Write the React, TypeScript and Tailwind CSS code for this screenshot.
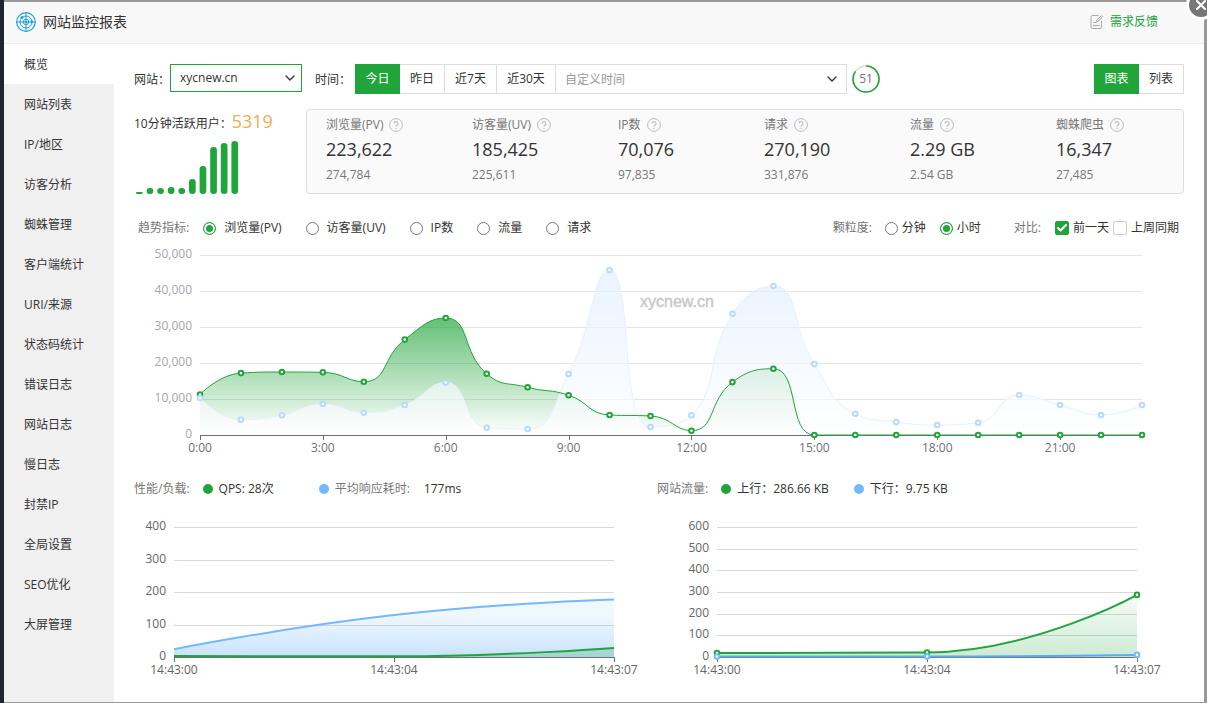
import type { ReactNode } from 'react';
import { Check, ChevronDown, X } from 'lucide-react';

const navItems = [
  '概览',
  '网站列表',
  'IP/地区',
  '访客分析',
  '蜘蛛管理',
  '客户端统计',
  'URI/来源',
  '状态码统计',
  '错误日志',
  '网站日志',
  '慢日志',
  '封禁IP',
  '全局设置',
  'SEO优化',
  '大屏管理',
];

const stats = [
  { label: '浏览量(PV)', value: '223,622', previous: '274,784' },
  { label: '访客量(UV)', value: '185,425', previous: '225,611' },
  { label: 'IP数', value: '70,076', previous: '97,835' },
  { label: '请求', value: '270,190', previous: '331,876' },
  { label: '流量', value: '2.29 GB', previous: '2.54 GB' },
  { label: '蜘蛛爬虫', value: '16,347', previous: '27,485' },
];

const metrics = ['浏览量(PV)', '访客量(UV)', 'IP数', '流量', '请求'];

const activeUsers = [2, 6, 6, 7, 6, 15, 28, 47, 51, 53];

const today = [
  11250, 17200, 17500, 17400, 14800, 26500, 32500, 17000, 13250, 11030, 5560, 5280,
  1200, 14700, 18400, 0, 0, 0, 0, 0, 0, 0, 0, 0,
];
const yesterday = [
  10280, 4250, 5470, 8610, 6190, 8330, 14600, 2030, 1670, 16950, 45850, 2200,
  5470, 33700, 41400, 19700, 5900, 3600, 2780, 3400, 11100, 8330, 5560, 8330,
];

type Point = { x: number; y: number };
type Plot = { left: number; right: number; top: number; bottom: number; max: number };

const clamp = (v: number, a: number, b: number) =>
  Math.max(Math.min(a, b), Math.min(v, Math.max(a, b)));

function toPoints(values: number[], plot: Plot): Point[] {
  const step = (plot.right - plot.left) / (values.length - 1);
  return values.map((v, i) => ({
    x: plot.left + i * step,
    y: plot.bottom - (v / plot.max) * (plot.bottom - plot.top),
  }));
}

// Bezier through every point, control points kept between the neighbours
function smoothPath(pts: Point[], smooth = 0.5) {
  let d = `M${pts[0].x},${pts[0].y}`;
  let c0 = pts[0];
  for (let i = 1; i < pts.length; i++) {
    const prev = pts[i - 1];
    const p = pts[i];
    const next = pts[i + 1];
    let c1 = p;
    let nextC0 = p;
    if (next) {
      const lenPrev = Math.hypot(p.x - prev.x, p.y - prev.y);
      const lenNext = Math.hypot(next.x - p.x, next.y - p.y);
      const ratio = lenNext / (lenNext + lenPrev);
      const nx = clamp(p.x + (next.x - prev.x) * smooth * ratio, p.x, next.x);
      const ny = clamp(p.y + (next.y - prev.y) * smooth * ratio, p.y, next.y);
      c1 = {
        x: clamp(p.x - ((nx - p.x) * lenPrev) / lenNext, prev.x, p.x),
        y: clamp(p.y - ((ny - p.y) * lenPrev) / lenNext, prev.y, p.y),
      };
      nextC0 = {
        x: p.x + ((p.x - c1.x) * lenNext) / lenPrev,
        y: p.y + ((p.y - c1.y) * lenNext) / lenPrev,
      };
    }
    d += ` C${c0.x},${c0.y} ${c1.x},${c1.y} ${p.x},${p.y}`;
    c0 = nextC0;
  }
  return d;
}

function areaPath(pts: Point[], plot: Plot) {
  return `${smoothPath(pts)} L${plot.right},${plot.bottom} L${plot.left},${plot.bottom} Z`;
}

function Dots({ points, color }: { points: Point[]; color: string }) {
  return (
    <g fill="#fff" stroke={color} strokeWidth="2">
      {points.map((p) => (
        <circle key={p.x} cx={p.x} cy={p.y} r="2.3" />
      ))}
    </g>
  );
}

function Axes({
  plot,
  yLabels,
  xLabels,
  yColor,
  xColor,
  gridColor,
}: {
  plot: Plot;
  yLabels: string[];
  xLabels: { x: number; text: string }[];
  yColor: string;
  xColor: string;
  gridColor: string;
}) {
  const step = (plot.bottom - plot.top) / (yLabels.length - 1);
  return (
    <g fontSize="12">
      {yLabels.map((text, i) => {
        const y = Math.round(plot.bottom - i * step);
        return (
          <g key={text}>
            {i > 0 && (
              <line x1={plot.left} x2={plot.right} y1={y + 0.5} y2={y + 0.5} stroke={gridColor} />
            )}
            <text x={plot.left - 8} y={y + 3} textAnchor="end" fill={yColor}>
              {text}
            </text>
          </g>
        );
      })}
      <line
        x1={plot.left}
        x2={plot.right}
        y1={plot.bottom + 0.5}
        y2={plot.bottom + 0.5}
        stroke="#6e7079"
      />
      {xLabels.map(({ x, text }) => (
        <g key={text}>
          <line
            x1={Math.round(x) + 0.5}
            x2={Math.round(x) + 0.5}
            y1={plot.bottom}
            y2={plot.bottom + 5}
            stroke="#6e7079"
          />
          <text x={x} y={plot.bottom + 17} textAnchor="middle" fill={xColor}>
            {text}
          </text>
        </g>
      ))}
    </g>
  );
}

function TrendChart() {
  const plot = { left: 66, right: 1008, top: 15, bottom: 195, max: 50000 };
  const current = toPoints(today, plot);
  const previous = toPoints(yesterday, plot);
  const xLabels = [0, 3, 6, 9, 12, 15, 18, 21].map((h) => ({ x: current[h].x, text: `${h}:00` }));

  return (
    <svg viewBox="0 0 1050 222" className="block w-full" role="img" aria-label="趋势图">
      <defs>
        <linearGradient id="today" x1="0" y1="0" x2="0" y2="1">
          <stop offset="0" stopColor="#20a53a" stopOpacity="0.7" />
          <stop offset="1" stopColor="#20a53a" stopOpacity="0" />
        </linearGradient>
        <linearGradient id="yesterday" x1="0" y1="0" x2="0" y2="1">
          <stop offset="0" stopColor="#e0eefe" stopOpacity="0.7" />
          <stop offset="1" stopColor="#ffffff" stopOpacity="0.7" />
        </linearGradient>
      </defs>
      <Axes
        plot={plot}
        yLabels={['0', '10,000', '20,000', '30,000', '40,000', '50,000']}
        xLabels={xLabels}
        yColor="#a6a6ad"
        xColor="#6e7079"
        gridColor="#e4e4e4"
      />
      <path d={areaPath(current, plot)} fill="url(#today)" />
      <path d={areaPath(previous, plot)} fill="url(#yesterday)" />
      <path d={smoothPath(previous)} fill="none" stroke="#e6f2ff" />
      <path d={smoothPath(current)} fill="none" stroke="#20a53a" />
      <Dots points={current} color="#20a53a" />
      <Dots points={previous} color="#b8dafd" />
      <text
        x="506"
        y="67"
        fontSize="16"
        fill="#c8c8c8"
        stroke="#c8c8c8"
        strokeWidth="0.4"
        className="font-['Liberation_Sans',sans-serif]"
      >
        xycnew.cn
      </text>
    </svg>
  );
}

const times = ['14:43:00', '14:43:04', '14:43:07'];

function LoadChart() {
  const plot = { left: 40, right: 480, top: 12, bottom: 142, max: 400 };
  const qps = toPoints([3, 2, 28], plot);
  const response = toPoints([24, 129, 177], plot);

  return (
    <svg viewBox="0 0 523 165" className="block w-full" role="img" aria-label="性能/负载">
      <defs>
        <linearGradient id="response" x1="0" y1="0" x2="0" y2="1">
          <stop offset="0" stopColor="#73b9ff" stopOpacity="0.1" />
          <stop offset="0.3" stopColor="#73b9ff" stopOpacity="0.12" />
          <stop offset="1" stopColor="#62aaf5" stopOpacity="0.35" />
        </linearGradient>
      </defs>
      <Axes
        plot={plot}
        yLabels={['0', '100', '200', '300', '400']}
        xLabels={times.map((text, i) => ({ x: qps[i].x, text }))}
        yColor="#666"
        xColor="#666"
        gridColor="#d9d9d9"
      />
      <path d={areaPath(response, plot)} fill="url(#response)" />
      <path d={areaPath(qps, plot)} fill="#20a53a" fillOpacity="0.2" />
      <path d={smoothPath(response)} fill="none" stroke="#73b9ff" strokeWidth="2" />
      <path d={smoothPath(qps)} fill="none" stroke="#20a53a" strokeWidth="2" />
    </svg>
  );
}

function TrafficChart() {
  const plot = { left: 60, right: 480, top: 12, bottom: 142, max: 600 };
  const up = toPoints([18, 21, 286.66], plot);
  const down = toPoints([2, 2, 9.75], plot);

  return (
    <svg viewBox="0 0 527 165" className="block w-full" role="img" aria-label="网站流量">
      <defs>
        <linearGradient id="up" x1="0" y1="0" x2="0" y2="1">
          <stop offset="0" stopColor="#20a53a" stopOpacity="0.04" />
          <stop offset="1" stopColor="#20a53a" stopOpacity="0.22" />
        </linearGradient>
      </defs>
      <Axes
        plot={plot}
        yLabels={['0', '100', '200', '300', '400', '500', '600']}
        xLabels={times.map((text, i) => ({ x: up[i].x, text }))}
        yColor="#666"
        xColor="#666"
        gridColor="#d9d9d9"
      />
      <path d={areaPath(up, plot)} fill="url(#up)" />
      <path d={smoothPath(up)} fill="none" stroke="#20a53a" strokeWidth="2" />
      <path d={smoothPath(down)} fill="none" stroke="#5ba9f5" strokeWidth="2" />
      <Dots points={up} color="#20a53a" />
      <Dots points={down} color="#73b9ff" />
    </svg>
  );
}

function RadarIcon() {
  return (
    <svg viewBox="0 0 20 20" className="size-5" fill="none" stroke="#20a0dc" aria-hidden="true">
      <circle cx="10" cy="10" r="9.3" strokeWidth="1.2" />
      <circle cx="10" cy="10" r="6" />
      <circle cx="10" cy="10" r="2.7" />
      <path d="M10 0.5v19M0.5 10h19" strokeWidth="1" />
      <circle cx="6" cy="5.5" r="1.5" fill="#20a0dc" stroke="none" />
      <circle cx="15.8" cy="9.8" r="1.4" fill="#20a0dc" stroke="none" />
      <circle cx="10" cy="10" r="1.1" fill="#20a0dc" stroke="none" />
    </svg>
  );
}

function FeedbackIcon() {
  return (
    <svg viewBox="0 0 14 16" className="h-4 w-[14px]" fill="none" stroke="#aaa" aria-hidden="true">
      <path d="M8.5 1.5H2.5a1.5 1.5 0 0 0-1.5 1.5v10a1.5 1.5 0 0 0 1.5 1.5h7.5a1.5 1.5 0 0 0 1.5-1.5V7" />
      <path d="M3 8.5h3.5M3 11.5h7" />
      <path d="m11.4 1.6 1.2 1.2L8 7.3l-1.6.4.4-1.6z" />
    </svg>
  );
}

function HelpIcon() {
  return (
    <svg viewBox="0 0 14 14" className="size-[14px]" fill="none" stroke="#bbb" aria-hidden="true">
      <circle cx="7" cy="7" r="6.4" />
      <path d="M5 5.6a2 2 0 1 1 3 1.7c-.7.4-1 .7-1 1.4" strokeWidth="1.1" />
      <circle cx="7" cy="10.4" r="0.7" fill="#bbb" stroke="none" />
    </svg>
  );
}

function Radio({
  name,
  label,
  checked,
  wide,
}: {
  name: string;
  label: string;
  checked?: boolean;
  wide?: boolean;
}) {
  return (
    <label className={wide ? 'flex items-center gap-2' : 'flex items-center gap-1'}>
      <input
        type="radio"
        name={name}
        defaultChecked={checked}
        className="size-[13px] appearance-none rounded-full border border-[#767676] bg-white checked:border-[#20a53a] checked:bg-[#20a53a] checked:inset-ring-2 checked:inset-ring-white"
      />
      {label}
    </label>
  );
}

function Checkbox({ label, checked }: { label: string; checked?: boolean }) {
  return (
    <label className="flex items-center gap-1">
      <span className="grid size-[14px] place-items-center">
        <input
          type="checkbox"
          defaultChecked={checked}
          className="peer size-[14px] appearance-none rounded-[2px] border border-[#ccc] bg-white [grid-area:1/1] checked:border-[#20a53a] checked:bg-[#20a53a]"
        />
        <Check
          className="pointer-events-none invisible size-3 text-white [grid-area:1/1] peer-checked:visible"
          strokeWidth={4}
        />
      </span>
      {label}
    </label>
  );
}

function Legend({ dot, children }: { dot: string; children: ReactNode }) {
  return (
    <span className="flex items-center gap-[6px]">
      <span className={`size-[10px] rounded-full ${dot}`} />
      {children}
    </span>
  );
}

export default function App() {
  return (
    <div className="flex min-h-screen overflow-hidden bg-[#999] font-['Open_Sans','Noto_Sans_CJK_SC',sans-serif] text-xs text-[#333]">
      <div className="w-1 shrink-0 bg-[#22262a]" />

      <div className="relative mt-[2px] mr-[3px] mb-px flex flex-1 flex-col bg-white">
        <button
          aria-label="关闭"
          className="absolute -top-3 -right-3 flex size-[30px] items-center justify-center rounded-full border-[3px] border-white bg-[#777] text-white"
        >
          <X className="size-4" strokeWidth={3} />
        </button>

        <header className="flex h-[42px] items-center justify-between border-b border-[#eee] bg-[#f8f8f8] pr-[46px] pb-[2px] pl-3">
          <h1 className="flex items-center gap-[7px] text-sm">
            <RadarIcon />
            网站监控报表
          </h1>
          <a href="#feedback" className="flex items-center gap-[6px] text-[#20a53a]">
            <FeedbackIcon />
            需求反馈
          </a>
        </header>

        <div className="flex flex-1">
          <nav className="w-[110px] shrink-0 bg-[#f0f0f0]">
            {navItems.map((item, index) => (
              <a
                key={item}
                href="#"
                className={`flex h-10 items-center pt-[2px] pl-5 ${index === 0 ? 'bg-white' : ''}`}
              >
                {item}
              </a>
            ))}
          </nav>

          <main className="min-w-0 flex-1 px-5 pt-5">
            {/* Filters */}
            <div className="flex h-[30px] justify-between">
              <div className="flex items-center">
                <label htmlFor="site" className="w-9 pt-[2px]">
                  网站：
                </label>
                <div className="relative mb-[2px] h-7 w-[132px]">
                  <select
                    id="site"
                    className="size-full appearance-none border border-[#20a53a] bg-white pl-[9px] text-xs"
                  >
                    <option>xycnew.cn</option>
                  </select>
                  <ChevronDown className="pointer-events-none absolute top-[6px] right-1 size-4" />
                </div>
                <span className="ml-[13px] w-10 pt-[2px]">时间：</span>
                <div className="flex h-[30px]">
                  <button className="w-[45px] bg-[#20a53a] text-white">今日</button>
                  <button className="w-[45px] border-y border-r border-[#ddd]">昨日</button>
                  <button className="w-[52px] border-y border-r border-[#ddd]">近7天</button>
                  <button className="w-[59px] border-y border-r border-[#ddd]">近30天</button>
                  <div className="relative w-[291px]">
                    <select
                      aria-label="自定义时间"
                      className="size-full appearance-none border-y border-r border-[#ddd] bg-white pt-[2px] pl-[9px] text-xs text-[#999]"
                    >
                      <option>自定义时间</option>
                    </select>
                    <ChevronDown className="pointer-events-none absolute top-[7px] right-[7px] size-4" />
                  </div>
                </div>
                <div className="ml-[5px] grid size-7 place-items-center text-[#777]">
                  <svg viewBox="0 0 28 28" className="size-7 [grid-area:1/1]" fill="none" strokeWidth="1.6">
                    <circle cx="14" cy="14" r="13" stroke="#ddd" />
                    <circle
                      cx="14"
                      cy="14"
                      r="13"
                      stroke="#20a53a"
                      pathLength="60"
                      strokeDasharray="51 9"
                      transform="rotate(-90 14 14)"
                    />
                  </svg>
                  <span className="[grid-area:1/1]">51</span>
                </div>
              </div>
              <div className="flex">
                <button className="w-[45px] bg-[#20a53a] text-white">图表</button>
                <button className="w-[45px] border-y border-r border-[#ddd]">列表</button>
              </div>
            </div>

            {/* Overview */}
            <div className="mt-[15px] flex">
              <div className="w-[172px] shrink-0">
                <div className="flex h-6 items-center">
                  <span className="mt-[6px]">10分钟活跃用户：</span>
                  <span className="text-lg text-[#f0ad4e]">5319</span>
                </div>
                <svg viewBox="0 0 106 53" className="mt-2 ml-[2px] h-[53px] w-[106px]" fill="#20a53a">
                  {activeUsers.map((h, i) => (
                    <rect
                      key={i}
                      x={i * 10.6}
                      y={53 - h}
                      width="6.7"
                      height={h}
                      rx={Math.min(3.3, h / 2)}
                    />
                  ))}
                </svg>
              </div>
              <div className="grid h-[85px] flex-1 grid-cols-6 rounded-[4px] border border-[#ddd] bg-[#fafafa]">
                {stats.map((stat) => (
                  <div key={stat.label} className="pt-[7px] pl-[19px] text-[#777]">
                    <div className="flex h-4 items-center gap-[6px]">
                      {stat.label}
                      <HelpIcon />
                    </div>
                    <div className="mt-[2px] text-lg leading-7 text-[#333]">{stat.value}</div>
                    <div className="mt-1 leading-4">{stat.previous}</div>
                  </div>
                ))}
              </div>
            </div>

            {/* Trend */}
            <div className="mt-6 flex h-5 items-center justify-between pr-[5px] pl-1">
              <div className="flex items-center">
                <span className="mr-[14px] text-[#777]">趋势指标:</span>
                <div className="flex gap-6">
                  {metrics.map((metric, index) => (
                    <Radio key={metric} name="metric" label={metric} checked={index === 0} wide />
                  ))}
                </div>
              </div>
              <div className="flex items-center">
                <span className="mr-[13px] text-[#777]">颗粒度:</span>
                <div className="flex gap-[14px]">
                  <Radio name="granularity" label="分钟" />
                  <Radio name="granularity" label="小时" checked />
                </div>
                <span className="mr-[14px] ml-[33px] text-[#777]">对比:</span>
                <div className="flex gap-1">
                  <Checkbox label="前一天" checked />
                  <Checkbox label="上周同期" />
                </div>
              </div>
            </div>
            <div className="mt-[2px]">
              <TrendChart />
            </div>

            {/* Realtime */}
            <div className="mt-[17px] grid grid-cols-[523fr_527fr]">
              <section>
                <div className="flex h-5 items-center">
                  <span className="mr-[13px] text-[#777]">性能/负载:</span>
                  <Legend dot="bg-[#20a53a]">QPS: 28次</Legend>
                  <span className="w-[45px]" />
                  <Legend dot="bg-[#73b9ff]">
                    <span className="text-[#777]">平均响应耗时:</span>
                    <span className="ml-2">177ms</span>
                  </Legend>
                </div>
                <div className="mt-4">
                  <LoadChart />
                </div>
              </section>
              <section>
                <div className="flex h-5 items-center">
                  <span className="mr-[13px] text-[#777]">网站流量:</span>
                  <Legend dot="bg-[#20a53a]">上行：286.66 KB</Legend>
                  <span className="w-[25px]" />
                  <Legend dot="bg-[#73b9ff]">下行：9.75 KB</Legend>
                </div>
                <div className="mt-4">
                  <TrafficChart />
                </div>
              </section>
            </div>
          </main>
        </div>
      </div>
    </div>
  );
}
